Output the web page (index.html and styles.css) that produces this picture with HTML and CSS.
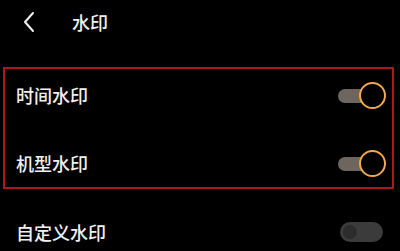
FILE: index.html
```html
<!DOCTYPE html>
<html lang="zh">
<head>
<meta charset="utf-8">
<link rel="stylesheet" href="styles.css">
</head>
<body>
<div class="header">
  <svg class="back" width="14" height="22" viewBox="0 0 14 22"><polyline points="11,2 3,11 11,20" fill="none" stroke="#f2f2f2" stroke-width="2" stroke-linecap="round" stroke-linejoin="round"/></svg>
  <span class="title">水印</span>
</div>
<div class="box">
  <div class="row">
    <span class="label">时间水印</span>
    <span class="toggle-on"><span class="track"></span><span class="knob"></span></span>
  </div>
  <div class="row">
    <span class="label">机型水印</span>
    <span class="toggle-on"><span class="track"></span><span class="knob"></span></span>
  </div>
</div>
<div class="row row-out">
  <span class="label">自定义水印</span>
  <span class="toggle-off"><span class="knob-off"></span></span>
</div>
</body>
</html>
```

FILE: styles.css
```css
html, body {
  margin: 0;
  padding: 0;
  background: #000;
  width: 400px;
  height: 251px;
  overflow: hidden;
  font-family: "Noto Sans CJK SC", "Noto Sans", sans-serif;
  color: #f0f0f0;
}
.header {
  height: 44px;
  display: flex;
  align-items: center;
  padding-left: 22px;
}
.back {
  display: block;
}
.title {
  margin-left: 36px;
  font-size: 18px;
  font-weight: 500;
  line-height: 1;
}
.box {
  margin: 23px 6px 0 3px;
  border: 2px solid #b0161b;
  padding: 2px 6px 0 11px;
  display: flex;
  flex-direction: column;
  gap: 20px;
  height: 116px;
  box-sizing: content-box;
}
.row {
  height: 48px;
  display: flex;
  align-items: center;
  justify-content: space-between;
}
.label {
  font-size: 18px;
  font-weight: 500;
  line-height: 1;
}
.toggle-on {
  position: relative;
  width: 48px;
  height: 27px;
  display: block;
}
.track {
  position: absolute;
  left: 0;
  top: 7px;
  width: 34px;
  height: 14px;
  border-radius: 7px;
  background: #6e655e;
}
.knob {
  position: absolute;
  right: 0;
  top: 0;
  width: 23px;
  height: 23px;
  border: 2.5px solid #f3a84a;
  border-radius: 50%;
  background: #000;
}
.row-out {
  margin-top: 19px;
  padding-left: 16px;
  padding-right: 17px;
}
.toggle-off {
  width: 43px;
  height: 20px;
  border-radius: 10px;
  background: #3b3b3b;
  display: flex;
  align-items: center;
  padding-left: 3px;
  box-sizing: border-box;
}
.knob-off {
  width: 14px;
  height: 14px;
  border-radius: 50%;
  background: #2c2c2c;
}
```
